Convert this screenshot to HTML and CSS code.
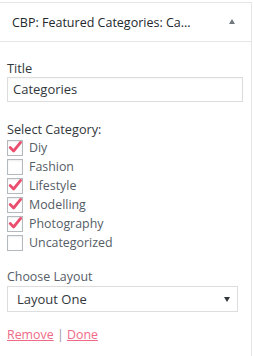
FILE: index.html
```html
<!DOCTYPE html>
<html>
<head>
<meta charset="utf-8">
<link rel="stylesheet" href="styles.css">
</head>
<body>
<div class="widget">
  <div class="widget-top">
    <span class="widget-title">CBP: Featured Categories: Ca...</span>
    <span class="toggle"></span>
  </div>
  <div class="widget-inside">
    <label class="field-label title-label">Title</label>
    <div class="text-input">Categories</div>

    <div class="field-label select-label">Select Category:</div>
    <ul class="cat-list">
      <li class="cat"><span class="box checked"><svg viewBox="0 0 16 16"><path d="M3.2 7.6 L6.6 11 L13.6 2.4"/></svg></span>Diy</li>
      <li class="cat"><span class="box"></span>Fashion</li>
      <li class="cat"><span class="box checked"><svg viewBox="0 0 16 16"><path d="M3.2 7.6 L6.6 11 L13.6 2.4"/></svg></span>Lifestyle</li>
      <li class="cat"><span class="box checked"><svg viewBox="0 0 16 16"><path d="M3.2 7.6 L6.6 11 L13.6 2.4"/></svg></span>Modelling</li>
      <li class="cat"><span class="box checked"><svg viewBox="0 0 16 16"><path d="M3.2 7.6 L6.6 11 L13.6 2.4"/></svg></span>Photography</li>
      <li class="cat"><span class="box"></span>Uncategorized</li>
    </ul>

    <div class="field-label layout-label">Choose Layout</div>
    <div class="select">
      <span>Layout One</span>
      <span class="arrow"></span>
    </div>

    <div class="actions">
      <a class="link" href="#">Remove</a><span class="sep"> | </span><a class="link" href="#">Done</a>
    </div>
  </div>
</div>
</body>
</html>
```

FILE: styles.css
```css
html, body {
  margin: 0;
  padding: 0;
  background: #fff;
}
body {
  font-family: "Open Sans", "Noto Sans", sans-serif;
  font-size: 12.4px;
  color: #23282d;
}
.widget {
  margin-top: 2px;
  width: 252px;
  height: 354px;
  box-sizing: border-box;
  border-top: 1px solid #e5e5e5;
  border-right: 1px solid #e5e5e5;
  background: #fff;
  overflow: hidden;
}
.widget-top {
  height: 38px;
  display: flex;
  align-items: center;
  justify-content: space-between;
  padding: 0 16px 0 12px;
  border-bottom: 1px solid #e5e5e5;
}
.widget-title {
  font-size: 12.5px;
  color: #23282d;
  white-space: nowrap;
}
.toggle {
  width: 0;
  height: 0;
  border-left: 3.5px solid transparent;
  border-right: 3.5px solid transparent;
  border-bottom: 5px solid #72777c;
  margin-top: -2px;
}
.widget-inside {
  padding: 0 7px;
}
.field-label {
  display: block;
  line-height: 17px;
}
.title-label {
  margin-top: 18px;
  font-size: 12.8px;
  color: #32373c;
}
.text-input {
  width: 236px;
  height: 25px;
  box-sizing: border-box;
  border: 1px solid #ddd;
  padding-left: 5px;
  line-height: 23px;
  font-size: 13px;
  color: #32373c;
  box-shadow: inset 0 1px 2px rgba(0,0,0,0.04);
}
.select-label {
  margin-top: 19px;
  font-size: 12.7px;
  color: #32373c;
}
.cat-list {
  list-style: none;
  margin: 0;
  padding: 0;
}
.cat {
  height: 19px;
  display: flex;
  align-items: center;
  color: #555d66;
}
.box {
  width: 16px;
  height: 16px;
  box-sizing: border-box;
  border: 1px solid #b4b9be;
  background: #fff;
  margin-right: 6px;
  display: flex;
  align-items: center;
  justify-content: center;
  box-shadow: inset 0 1px 2px rgba(0,0,0,0.08);
}
.box svg {
  width: 16px;
  height: 16px;
  overflow: visible;
}
.box svg path {
  fill: none;
  stroke: #ea4f6f;
  stroke-width: 2.8;
  stroke-linecap: round;
  stroke-linejoin: round;
}
.layout-label {
  margin-top: 16px;
  color: #555d66;
}
.select {
  margin-top: 1px;
  width: 231px;
  height: 26px;
  box-sizing: border-box;
  border: 1px solid #ddd;
  display: flex;
  align-items: center;
  justify-content: space-between;
  padding: 0 7px 0 9px;
  font-size: 13px;
  color: #32373c;
}
.arrow {
  width: 0;
  height: 0;
  border-left: 3px solid transparent;
  border-right: 3px solid transparent;
  border-top: 5px solid #32373c;
}
.actions {
  margin-top: 14px;
  line-height: 18px;
}
.link {
  color: #ef6a87;
  text-decoration: underline;
}
.sep {
  color: #999;
}
```
